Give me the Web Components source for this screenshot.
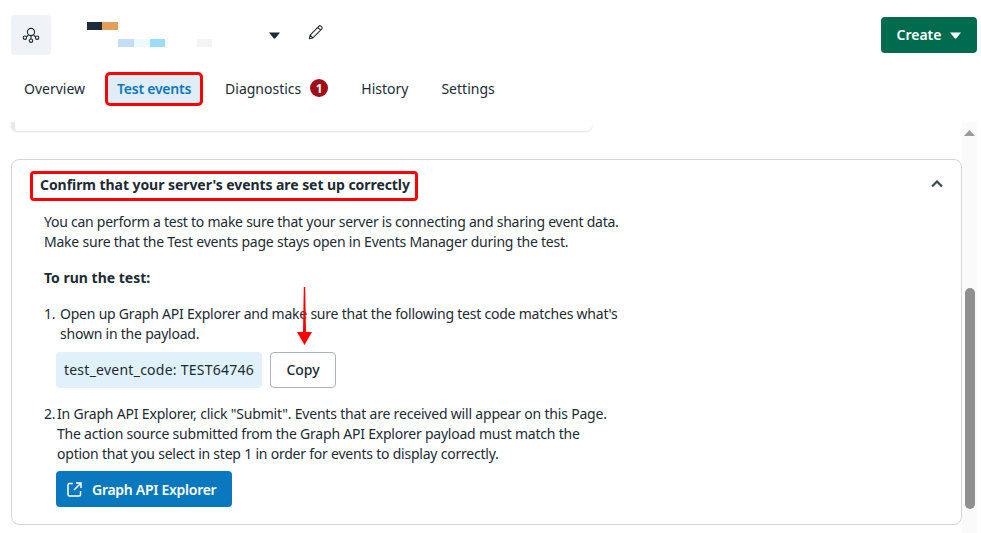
<!doctype html>
<html><head><meta charset="utf-8"><style>
html,body{margin:0;height:533px;overflow:hidden;background:#fff;font-family:"Noto Sans","Liberation Sans",sans-serif;color:#1c2b33}
</style></head><body>
<em-page></em-page>
<script>
const def=(n,css,html)=>customElements.define(n,class extends HTMLElement{constructor(){super();this.attachShadow({mode:'open'}).innerHTML=`<style>${css}</style>${html}`;}});
def('em-button',`
:host{display:inline-flex;box-sizing:border-box;height:36px;border-radius:4px;align-items:center;justify-content:center;font-size:14px;font-weight:600;white-space:nowrap;gap:9px}
:host([kind=green]){background:#016b4f;color:#fff;width:96px;padding-bottom:2px}
:host([kind=green]) ::slotted(svg){margin-top:2px}
:host([kind=blue]){background:#0a78be;color:#fff;width:176px;justify-content:flex-start;padding-left:10px;letter-spacing:-.28px}
:host([kind=plain]){background:#fff;color:#1c2b33;border:1px solid #a9b5bd;width:66px;font-weight:500;padding-bottom:2px}
`,`<slot></slot>`);
def('em-header',`
:host{display:flex;align-items:flex-start;height:72px;box-sizing:border-box;padding:15px 4px 0 11px}
.ic{width:40px;height:40px;background:#eff3f7;border-radius:4px;display:flex;align-items:center;justify-content:center;flex:none}
.name{width:175px;margin-left:36px;padding-top:7px;flex:none}
.r{display:flex;height:8px}.r+.r{margin-top:9px}.r i{display:block;height:8px}
.caret{margin:17px 0 0 7px;flex:none}
.pen{margin:9px 0 0 28px;flex:none}
.sp{flex:1}
.btn{margin-top:2px}
`,`<div class="ic"><svg width="20" height="20" viewBox="0 0 20 20" fill="none" stroke="#1c2b33" stroke-width="1.100"><circle cx="10" cy="7" r="3.600"/><circle cx="3.900" cy="12.700" r="1.700"/><circle cx="16.100" cy="12.700" r="1.700"/><circle cx="10" cy="15.700" r="1.700"/><path d="M10 10.600v3.400M5.400 11.800l2-1.600M14.600 11.800l-2-1.600"/></svg></div>
<div class="name"><div class="r"><i style="width:15px;background:#1f2d38"></i><i style="width:16px;background:#e0a05c"></i></div>
<div class="r"><i style="width:31px"></i><i style="width:16px;background:#c4dcf6"></i><i style="width:16px;background:#ecfafd"></i><i style="width:15px;background:#9bdcf8"></i><i style="width:32px"></i><i style="width:15px;background:#f6f3f7"></i></div></div>
<svg class="caret" width="11" height="7" viewBox="0 0 11 7"><path d="M0 .5h11L6.400 6.200q-.9 .9-1.800 0z" fill="#1c2b33"/></svg>
<svg class="pen" width="16" height="16" viewBox="0 0 18 18" fill="none" stroke="#1c2b33" stroke-width="1.200" stroke-linejoin="round"><path d="M1.500 16.500l.9-4L12.400 2.400q1-1 2 0l1.200 1.200q1 1 0 2L5.500 15.600zM2.400 12.500l3.100 3.100M11 3.800l3.200 3.200"/></svg>
<div class="sp"></div><em-button class="btn" kind="green">Create<svg width="11" height="7" viewBox="0 0 11 7"><path d="M0 .5h11L6.400 6.200q-.9 .9-1.800 0z" fill="#fff"/></svg></em-button>`);
def('em-tab',`
:host{display:inline-flex;align-items:center;height:30px;box-sizing:border-box;font-size:14px;color:#1c2b33;white-space:nowrap;gap:9px;border-radius:3px;margin-right:33px;padding-bottom:2px}
:host([active]){background:#e0edf7;color:#0a78be;font-weight:600;letter-spacing:-.25px;outline:3px solid #f00;outline-offset:-1px;width:94px;justify-content:center;margin-right:24px}
`,`<slot></slot>`);
def('em-tabs',`
:host{display:flex;align-items:center;height:34px;padding-left:24px;box-sizing:border-box}
::slotted(*){flex:none}
`,`<slot></slot>`);
def('em-badge',`
:host{display:inline-flex;width:18px;height:18px;border-radius:50%;background:#a30d17;color:#fff;font-size:12px;font-weight:700;align-items:center;justify-content:center}
`,`<slot></slot>`);
def('em-scroller',`
:host{display:flex;height:411px;margin-top:16px;box-sizing:border-box;position:relative}
.main{flex:1;min-width:0;padding-left:11px;box-sizing:border-box}
.bar{width:15px;margin-right:4px;flex:none;background:#fafafa;display:flex;flex-direction:column;align-items:center;padding-top:8px;box-sizing:border-box}
.thumb{width:10px;height:221px;border-radius:5px;background:#8f8f8f;margin-top:152px}
`,`<div class="main"><slot></slot></div><div class="bar"><svg width="11" height="6" viewBox="0 0 11 6"><path d="M5.500 0L11 6H0z" fill="#9a9a9a"/></svg><div class="thumb"></div></div>`);
def('em-prevcard',`
:host{display:block;width:581px;height:9px;background:#fff;border-radius:0 0 6px 6px;box-shadow:0 1px 2px rgba(0,0,0,.12);position:relative;border-left:4px solid #e6e9ee;box-sizing:border-box;margin-bottom:28px}
`,``);
def('em-accordion',`
:host{display:block;width:951px;height:366px;box-sizing:border-box;border:1px solid #d5d5d5;border-radius:8px;background:#fff;position:relative}
.head{display:flex;align-items:center;justify-content:space-between;padding:13px 18px 0 20px}
h2{margin:0;font-size:14px;font-weight:700;letter-spacing:-.06px;line-height:18px;color:#1c2b33;outline:3px solid #f00;outline-offset:-1px;border-radius:2px;padding:3px 6px 5px 8px;height:26px;box-sizing:border-box;white-space:nowrap}
.body{padding:13px 0 0 32px}
svg{margin-top:-4px}
`,`<div class="head"><h2><slot name="title"></slot></h2><svg width="12" height="8" viewBox="0 0 12 8" fill="none" stroke="#3c4a52" stroke-width="2.200"><path d="M1 6.500l5-5 5 5"/></svg></div><div class="body"><slot></slot></div>`);
def('em-step',`
:host{display:flex;font-size:14px;line-height:20px;width:580px;letter-spacing:-.22px}
.n{flex:none;width:var(--n,16px)}
.c{flex:1}
`,`<div class="n"><slot name="n"></slot></div><div class="c"><slot></slot></div>`);
def('em-code',`
:host{display:inline-flex;height:36px;align-items:center;justify-content:center;box-sizing:border-box;background:#e0f1fb;border-radius:4px;width:206px;font-size:14px;letter-spacing:.25px;white-space:nowrap;padding-bottom:2px}
`,`<slot></slot>`);
def('em-page',`
:host{display:block;position:relative;width:981px;height:533px}
p{margin:0;font-size:14px;line-height:20px;letter-spacing:-.22px}
.strong{font-weight:700;margin-top:16px;letter-spacing:0}
.row{display:flex;gap:8px;margin:8px 0 0 12px}
.s1{margin-top:16px}.s2{margin-top:16px}
.cta{margin:7px 0 0 12px}
.arrow{position:absolute;left:297px;top:287px}
.first{margin-right:22px}
`,`<em-header></em-header>
<em-tabs><em-tab class="first">Overview</em-tab><em-tab active>Test events</em-tab><em-tab>Diagnostics<em-badge>1</em-badge></em-tab><em-tab>History</em-tab><em-tab>Settings</em-tab></em-tabs>
<em-scroller><em-prevcard></em-prevcard>
<em-accordion><span slot="title">Confirm that your server's events are set up correctly</span>
<p><span style="letter-spacing:-.25px">You can perform a test to make sure that your server is connecting and sharing event data.</span><br>Make sure that the Test events page stays open in Events Manager during the test.</p>
<p class="strong">To run the test:</p>
<em-step class="s1" style="--n:16px"><span slot="n">1.</span>Open up Graph API Explorer and make sure that the following test code matches what's shown in the payload.</em-step>
<div class="row"><em-code>test_event_code: TEST64746</em-code><em-button kind="plain">Copy</em-button></div>
<em-step class="s2" style="--n:13px"><span slot="n">2.</span><span style="letter-spacing:-.19px">In Graph API Explorer, click "Submit". Events that are received will appear on this Page.</span><br>The action source submitted from the Graph API Explorer payload must match the<br>option that you select in step 1 in order for events to display correctly.</em-step>
<em-button class="cta" kind="blue"><svg width="17" height="17" viewBox="0 0 17 17" fill="none" stroke="#fff" stroke-width="1.500"><path d="M7 2.500H3.500a1.500 1.500 0 0 0-1.500 1.500v9.500a1.500 1.500 0 0 0 1.500 1.500H13a1.500 1.500 0 0 0 1.500-1.500V10M10 2h5v5M15 2L8 9"/></svg>Graph API Explorer</em-button>
</em-accordion></em-scroller>
<svg class="arrow" width="15" height="58" viewBox="0 0 15 58"><path d="M6.800 0h1.400L9 45h6L7.500 58 0 45h6z" fill="#f00"/></svg>`);
</script></body></html>
